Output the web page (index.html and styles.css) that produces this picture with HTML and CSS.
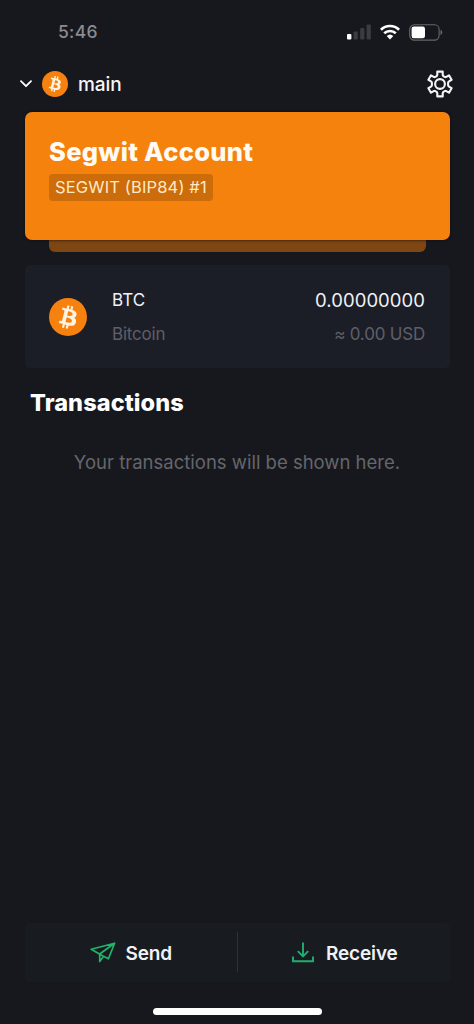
FILE: index.html
```
<!DOCTYPE html>
<html lang="en">
<head>
<meta charset="utf-8">
<title>Wallet</title>
<link rel="stylesheet" href="styles.css">
</head>
<body>
<svg width="0" height="0" class="defs">
  <symbol id="bitcoin" viewBox="0 0 32 32">
    <circle cx="16" cy="16" r="16" fill="#f6810f"/>
    <path fill="#fff3e2" d="M23.189 14.02c.314-2.096-1.283-3.223-3.465-3.975l.708-2.84-1.728-.43-.69 2.765c-.454-.114-.92-.22-1.385-.326l.695-2.783L15.596 6l-.708 2.839c-.376-.086-.746-.17-1.104-.26l.002-.009-2.384-.595-.46 1.846s1.283.294 1.256.312c.7.175.826.638.805 1.006l-.806 3.235c.048.012.11.03.18.057l-.183-.045-1.13 4.532c-.086.212-.303.531-.793.41.018.025-1.256-.313-1.256-.313l-.858 1.978 2.25.561c.418.105.828.215 1.231.318l-.715 2.872 1.727.43.708-2.84c.472.127.93.245 1.378.357l-.706 2.828 1.728.43.715-2.866c2.948.558 5.164.333 6.097-2.333.752-2.146-.037-3.385-1.588-4.192 1.13-.26 1.98-1.003 2.207-2.538zm-3.95 5.538c-.533 2.147-4.148.986-5.32.695l.95-3.805c1.172.293 4.929.872 4.37 3.11zm.535-5.569c-.487 1.953-3.495.96-4.47.717l.86-3.45c.975.243 4.118.696 3.61 2.733z"/>
  </symbol>
</svg>
<div class="screen">
  <div class="status">
    <span class="time">5:46</span>
    <svg class="signal" width="24" height="16" viewBox="0 0 24 16">
      <rect x="0" y="10" width="4.4" height="5.6" rx="1" fill="#fff"/>
      <g fill="#3b3c40"><rect x="6.6" y="7.4" width="4.2" height="8.2" rx="1"/><rect x="13.2" y="4" width="4.2" height="11.6" rx="1"/><rect x="19.6" y="0.6" width="4.2" height="15" rx="1"/></g>
    </svg>
    <svg class="wifi" width="20" height="16" viewBox="0 0 20 16">
      <g fill="none" stroke="#fff" stroke-width="2.6"><path d="M0.9 5.7a13 13 0 0 1 18.2 0"/><path d="M4.2 9.3a8.3 8.3 0 0 1 11.6 0"/></g>
      <path d="M6.7 12a4.9 4.9 0 0 1 6.6 0L10 15.4z" fill="#fff"/>
    </svg>
    <svg class="battery" width="34" height="17" viewBox="0 0 34 17">
      <rect x=".7" y=".7" width="29.4" height="15.4" rx="4.6" fill="none" stroke="#66676b" stroke-width="1.1"/>
      <rect x="2.6" y="2.6" width="13.4" height="11.6" rx="2.2" fill="#fff"/>
      <path d="M31.5 5.8q1.8.7 1.8 2.6t-1.8 2.6z" fill="#66676b"/>
    </svg>
  </div>
  <header class="header">
    <svg class="chevron" width="12" height="8" viewBox="0 0 12 8"><path d="M1 1.2l5 5 5-5" fill="none" stroke="#fff" stroke-width="1.8" stroke-linecap="round" stroke-linejoin="round"/></svg>
    <svg class="coin-small"><use href="#bitcoin"/></svg>
    <span class="wallet">main</span>
    <svg class="gear" width="28" height="28" viewBox="0 0 28 28" fill="none" stroke="#f4f4f6" stroke-width="2.1" stroke-linejoin="round">
      <path d="M11.3 1.6h5.4v3.2q0 1 1 1.5l.9.5q.9.5 1.7.1l2.7-1.6 2.6 4.5-2.6 1.6q-.9.5-.9 1.5v2.2q0 1 .9 1.5l2.6 1.6-2.6 4.5-2.7-1.6q-.8-.4-1.7.1l-.9.5q-1 .5-1 1.5v3.2h-5.4v-3.2q0-1-1-1.5l-.9-.5q-.9-.5-1.7-.1L5 22.7l-2.6-4.5 2.6-1.6q.9-.5.9-1.5v-2.2q0-1-.9-1.5l-2.6-1.6L5 5.3l2.7 1.6q.8.4 1.7-.1l.9-.5q1-.5 1-1.5z"/>
      <circle cx="14" cy="14" r="4.9"/>
    </svg>
  </header>
  <section class="account">
    <h1 class="account-name">Segwit Account</h1>
    <span class="badge">SEGWIT (BIP84) #1</span>
  </section>
  <div class="stack"></div>
  <section class="asset">
    <svg class="coin"><use href="#bitcoin"/></svg>
    <div class="asset-col">
      <span class="symbol">BTC</span>
      <span class="name">Bitcoin</span>
    </div>
    <div class="asset-col amounts">
      <span class="amount">0.00000000</span>
      <span class="fiat">≈ 0.00 USD</span>
    </div>
  </section>
  <h2 class="title">Transactions</h2>
  <p class="empty">Your transactions will be shown here.</p>
  <nav class="actions">
    <div class="action send">
      <svg width="27" height="21" viewBox="0 0 27 21" fill="none" stroke="#20b568" stroke-width="1.7" stroke-linejoin="round"><path d="M1.2 7.3L24.6 1.2 18.4 16.8 12 13.4zM24.6 1.2L9.7 12v7.4l3.7-4.8"/></svg>
      <span class="label">Send</span>
    </div>
    <div class="divider"></div>
    <div class="action receive">
      <svg width="22" height="21" viewBox="0 0 22 21" fill="none" stroke="#23ad72" stroke-width="1.9"><path d="M1 14.6v4.7h20v-4.7M11 .5v13.6M5.8 9.2l5.2 5.2 5.2-5.2"/></svg>
      <span class="label">Receive</span>
    </div>
  </nav>
  <div class="home"></div>
</div>
</body>
</html>
```
FILE: styles.css
```
* { box-sizing: border-box; }
body { margin: 0; background: #17181d; color: #fff; font-family: Inter, "Liberation Sans", sans-serif; }
svg { display: block; flex: none; }
span, h1, h2, p { white-space: nowrap; }
.defs { position: absolute; }
.screen { width: 474px; height: 1024px; display: flex; flex-direction: column; overflow: hidden; }
.status { height: 64px; display: flex; align-items: center; padding: 0 31px 0 58px; flex: none; }
.time { font-size: 17.5px; font-weight: 500; letter-spacing: .3px; color: #8b8b90; margin-right: auto; padding-bottom: 1px; }
.wifi { margin: 0 9px; }
.header { height: 40px; display: flex; align-items: center; padding: 0 20px; flex: none; }
.coin-small { width: 26px; height: 26px; margin: 0 10px 0 10px; }
.wallet { font-size: 19px; font-weight: 500; margin-right: auto; color: #f6f6f8; letter-spacing: -.1px; }
.account { margin: 7.5px 24px 0 24.5px; height: 128px; padding: 24px 24.5px; border-radius: 7px; background: #f5820d; display: flex; flex-direction: column; align-items: flex-start; flex: none; box-shadow: 0 0 3px #120b0b; position: relative; }
.account-name { margin: 0; font-size: 25.5px; line-height: 31px; font-weight: 800; letter-spacing: .3px; color: #fffaf2; }
.badge { margin-top: 7px; height: 27px; line-height: 27px; padding: 0 6px; border-radius: 4px; background: #cc6c0b; color: #ffe9c4; font-size: 16.5px; letter-spacing: .15px; }
.stack { height: 12px; margin: 0 48.5px 0 49px; background: #7d4612; border-radius: 0 0 6px 6px; flex: none; }
.asset { margin: 13.5px 24.5px 0; height: 103px; background: #1c1e27; border-radius: 5px; padding: 0 24.5px; display: flex; align-items: center; flex: none; }
.coin { width: 38px; height: 38px; margin-right: 25px; }
.asset-col { display: flex; flex-direction: column; line-height: 24px; gap: 10px; }
.amounts { margin-left: auto; align-items: flex-end; }
.symbol { font-size: 17px; color: #f1f1f4; letter-spacing: .1px; }
.name, .fiat { font-size: 17px; color: #5e5f67; letter-spacing: -.2px; }
.amount { font-size: 18.5px; color: #f1f1f4; letter-spacing: .05px; }
.title { margin: 19px 0 0 30px; font-size: 23.5px; line-height: 31px; font-weight: 800; letter-spacing: .1px; flex: none; }
.empty { margin: 32px 0 0; text-align: center; font-size: 18.5px; line-height: 24px; color: #65666b; flex: none; }
.actions { margin: auto 24.5px 0; height: 59px; background: #181c21; border-radius: 5px; display: flex; align-items: center; flex: none; }
.action { flex: 1 1 0; min-width: 0; display: flex; align-items: center; font-size: 19px; font-weight: 600; letter-spacing: -.15px; color: #f1f2f6; }
.label { padding-top: 2px; }
.send { flex: none; width: 212px; padding-left: 65px; gap: 9px; }
.receive { padding-left: 54.5px; gap: 12px; }
.divider { width: 1px; height: 40px; background: #303136; }
.home { width: 169px; height: 6.5px; margin: 26.5px auto 9.5px; border-radius: 4px; background: #fff; flex: none; }
```
